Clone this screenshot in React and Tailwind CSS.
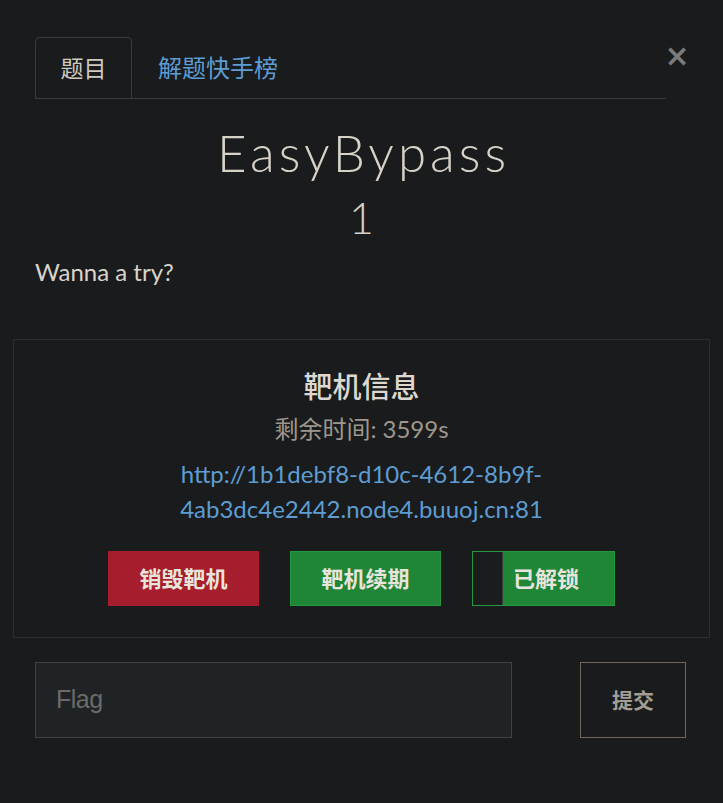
import React from "react";

const cjk = { fontFamily: "Lato, 'Noto Sans CJK SC', sans-serif" };

export default function App() {
  return (
    <div className="relative w-full min-h-screen bg-[#1a1b1d] text-[#d8d4cc]" style={cjk}>
      <div className="pt-[37px] pl-[35px] w-[666px]">
        <div className="flex items-end border-b border-[#3a3b3d]">
          <div className="w-[97px] h-[61px] border border-b-0 border-[#3a3b3d] rounded-t-[5px] flex items-center justify-center text-[23px] text-[#cfcac0]">
            题目
          </div>
          <div className="h-[61px] pl-[26px] flex items-center text-[24px] text-[#5d9dd2]">
            解题快手榜
          </div>
        </div>
      </div>
      <button className="absolute left-[664px] top-[41px] w-[26px] h-[30px] flex items-center justify-center text-[#7b7b7b] text-[30px] font-bold leading-none" style={{ fontFamily: "'DejaVu Sans', sans-serif" }}>
        ×
      </button>

      <div className="flex flex-col items-center mt-[18px]">
        <div className="text-[51px] font-light leading-[72px] tracking-[4px] pl-[4px] text-[#d6d2c8]">EasyBypass</div>
        <div className="text-[43px] font-light leading-[56px] text-[#d6d2c8] mt-[1px] mb-[-3px]">1</div>
      </div>
      <div className="px-[35px] mt-[14px] text-[24px] leading-[30px] text-[#d8d4cc]">Wanna a try?</div>

      <div className="mx-[13px] mt-[52px] h-[299px] border border-[#2b2d2f] flex flex-col items-center">
        <div className="mt-[27px] text-[29px] font-medium leading-[40px] text-[#dcd8d0]">靶机信息</div>
        <div className="mt-[4px] text-[24px] leading-[36px] text-[#9e978c]">剩余时间: 3599s</div>
        <div className="mt-[9px] text-[24px] leading-[35px] text-[#5d9dd2] text-center">
          http://1b1debf8-d10c-4612-8b9f-
          <br />
          4ab3dc4e2442.node4.buuoj.cn:81
        </div>
        <div className="mt-[25px] flex gap-[31px]">
          <button className="w-[151px] h-[55px] bg-[#a61d2d] text-[22px] font-bold text-[#e8e4dc] flex items-center justify-center">
            销毁靶机
          </button>
          <button className="w-[151px] h-[55px] bg-[#1f8638] border border-[#24983f] text-[22px] font-bold text-[#e8e4dc] flex items-center justify-center">
            靶机续期
          </button>
          <button className="w-[143px] h-[55px] border border-[#24983f] flex">
            <span className="w-[30px] h-full bg-[#1b1c1e] border-r border-[#3a3b3d]"></span>
            <span className="flex-1 h-full bg-[#1f8638] text-[22px] font-bold text-[#e8e4dc] flex items-center pl-[10px]">
              已解锁
            </span>
          </button>
        </div>
      </div>

      <div className="px-[35px] mt-[24px] flex">
        <div className="w-[477px] h-[76px] bg-[#1f2326] border border-[#3e4245] flex items-center pl-[20px]">
          <span className="text-[25px] text-[#6b6a66] tracking-[-0.5px]" style={{ fontFamily: "'Liberation Sans Narrow', 'Liberation Sans', sans-serif" }}>
            Flag
          </span>
        </div>
        <button className="ml-[68px] w-[106px] h-[76px] border border-[#6f6757] text-[21px] font-bold text-[#a39d92] flex items-center justify-center">
          提交
        </button>
      </div>
    </div>
  );
}
